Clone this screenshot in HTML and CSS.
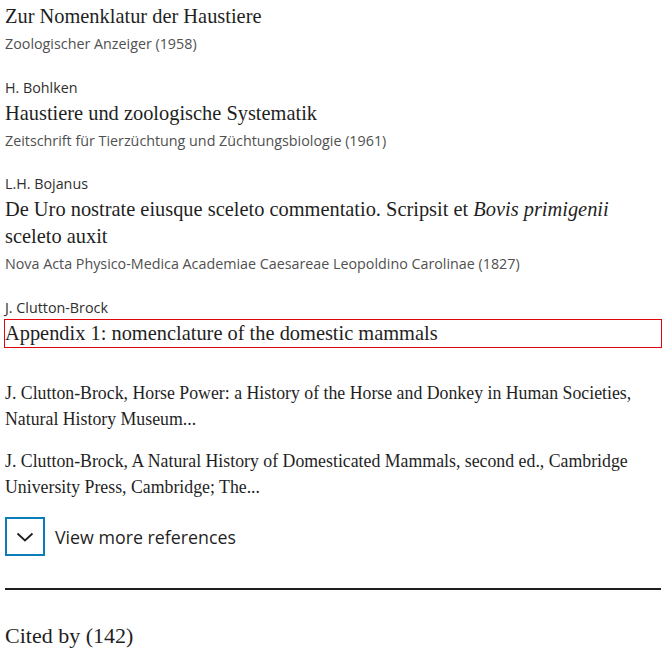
FILE: index.html
```html
<!DOCTYPE html>
<html lang="en">
<head>
<meta charset="utf-8">
<title>References</title>
<link rel="stylesheet" href="styles.css">
</head>
<body>
<main class="page">
  <ol class="refs">
    <li class="ref">
      <div class="ref-title">Zur Nomenklatur der Haustiere</div>
      <div class="ref-source">Zoologischer Anzeiger (1958)</div>
    </li>
    <li class="ref">
      <div class="ref-author">H. Bohlken</div>
      <div class="ref-title">Haustiere und zoologische Systematik</div>
      <div class="ref-source">Zeitschrift für Tierzüchtung und Züchtungsbiologie (1961)</div>
    </li>
    <li class="ref">
      <div class="ref-author">L.H. Bojanus</div>
      <div class="ref-title">De Uro nostrate eiusque sceleto commentatio. Scripsit et <em>Bovis primigenii</em> sceleto auxit</div>
      <div class="ref-source">Nova Acta Physico-Medica Academiae Caesareae Leopoldino Carolinae (1827)</div>
    </li>
    <li class="ref">
      <div class="ref-author">J. Clutton-Brock</div>
      <div class="ref-title ref-title-focus">Appendix 1: nomenclature of the domestic mammals</div>
    </li>
  </ol>
  <ol class="plain-refs">
    <li class="plain-ref">J. Clutton-Brock, Horse Power: a History of the Horse and Donkey in Human Societies, Natural History Museum...</li>
    <li class="plain-ref">J. Clutton-Brock, A Natural History of Domesticated Mammals, second ed., Cambridge University Press, Cambridge; The...</li>
  </ol>
  <div class="more">
    <button class="more-btn" type="button" aria-label="View more references">
      <svg width="18" height="10" viewBox="0 0 18 10" aria-hidden="true"><path d="M1.5 1.5 L9 8.5 L16.5 1.5" fill="none" stroke="#1f1f1f" stroke-width="1.8"/></svg>
    </button>
    <span class="more-label">View more references</span>
  </div>
  <hr class="rule">
  <h2 class="cited">Cited by (142)</h2>
</main>
</body>
</html>
```
FILE: styles.css
```css
html, body {
  margin: 0;
  padding: 0;
  background: #fff;
}
.page {
  padding: 3px 5px 0 5px;
  color: #1f1f1f;
}
.refs, .plain-refs {
  list-style: none;
  margin: 0;
  padding: 0;
}
.ref {
  display: flex;
  flex-direction: column;
  margin-bottom: 23.5px;
}
.ref:last-child {
  margin-bottom: 0;
}
.ref-author {
  font-family: "Open Sans", sans-serif;
  font-size: 14.3px;
  line-height: 20px;
  color: #2e2e2e;
  margin-bottom: 2px;
}
.ref-title {
  font-family: "Liberation Serif", serif;
  font-size: 20.4px;
  line-height: 27px;
  color: #1f1f1f;
}
.ref-title-focus {
  outline: 1px solid #e2050c;
  outline-offset: 0;
}
.ref-source {
  font-family: "Open Sans", sans-serif;
  font-size: 14.3px;
  line-height: 20px;
  color: #505050;
  margin-top: 4px;
}
.plain-refs {
  margin-top: 33.5px;
}
.plain-ref {
  font-family: "Liberation Serif", serif;
  font-size: 17.8px;
  line-height: 26px;
  color: #1f1f1f;
  margin-bottom: 16px;
}
.plain-ref:last-child {
  margin-bottom: 0;
}
.more {
  display: flex;
  align-items: center;
  gap: 10px;
  margin-top: 17px;
}
.more-btn {
  width: 40px;
  height: 39px;
  box-sizing: border-box;
  border: 2px solid #0c7dbb;
  background: #fff;
  padding: 0;
  display: flex;
  align-items: center;
  justify-content: center;
}
.more-label {
  font-family: "Open Sans", sans-serif;
  font-size: 17.8px;
  color: #1f1f1f;
}
.rule {
  border: 0;
  height: 2px;
  background: #1f1f1f;
  margin: 32px 0 0 0;
}
.cited {
  font-family: "Liberation Serif", serif;
  font-weight: normal;
  font-size: 22px;
  line-height: 27px;
  margin: 32px 0 0 0;
  color: #1f1f1f;
}
```
